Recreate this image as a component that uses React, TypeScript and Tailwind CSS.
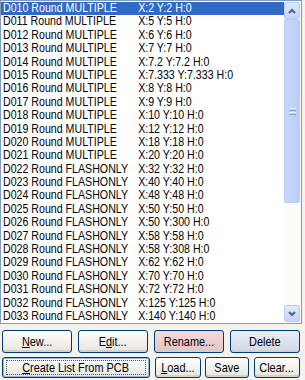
import React from 'react';

type Aperture = { code: string; kind: string; x: string; y: string };

const apertures: Aperture[] = [
  { code: 'D010', kind: 'MULTIPLE', x: '2', y: '2' },
  { code: 'D011', kind: 'MULTIPLE', x: '5', y: '5' },
  { code: 'D012', kind: 'MULTIPLE', x: '6', y: '6' },
  { code: 'D013', kind: 'MULTIPLE', x: '7', y: '7' },
  { code: 'D014', kind: 'MULTIPLE', x: '7.2', y: '7.2' },
  { code: 'D015', kind: 'MULTIPLE', x: '7.333', y: '7.333' },
  { code: 'D016', kind: 'MULTIPLE', x: '8', y: '8' },
  { code: 'D017', kind: 'MULTIPLE', x: '9', y: '9' },
  { code: 'D018', kind: 'MULTIPLE', x: '10', y: '10' },
  { code: 'D019', kind: 'MULTIPLE', x: '12', y: '12' },
  { code: 'D020', kind: 'MULTIPLE', x: '18', y: '18' },
  { code: 'D021', kind: 'MULTIPLE', x: '20', y: '20' },
  { code: 'D022', kind: 'FLASHONLY', x: '32', y: '32' },
  { code: 'D023', kind: 'FLASHONLY', x: '40', y: '40' },
  { code: 'D024', kind: 'FLASHONLY', x: '48', y: '48' },
  { code: 'D025', kind: 'FLASHONLY', x: '50', y: '50' },
  { code: 'D026', kind: 'FLASHONLY', x: '50', y: '300' },
  { code: 'D027', kind: 'FLASHONLY', x: '58', y: '58' },
  { code: 'D028', kind: 'FLASHONLY', x: '58', y: '308' },
  { code: 'D029', kind: 'FLASHONLY', x: '62', y: '62' },
  { code: 'D030', kind: 'FLASHONLY', x: '70', y: '70' },
  { code: 'D031', kind: 'FLASHONLY', x: '72', y: '72' },
  { code: 'D032', kind: 'FLASHONLY', x: '125', y: '125' },
  { code: 'D033', kind: 'FLASHONLY', x: '140', y: '140' },
];

const ScrollButton: React.FC<{ up?: boolean }> = ({ up }) => (
  <div className="h-[17px] w-[16px] shrink-0 rounded-[2px] border border-[#bacbf5] bg-gradient-to-b from-[#e0e9fd] to-[#c3d4fb] flex items-center justify-center">
    <svg width="8" height="6" viewBox="0 0 8 6">
      <path
        d={up ? 'M1 5 L4 2 L7 5' : 'M1 1 L4 4 L7 1'}
        fill="none"
        stroke="#4d6185"
        strokeWidth="2"
      />
    </svg>
  </div>
);

// XP-era Tahoma is narrower than Arial, so squeeze the label horizontally
const Narrow: React.FC<{ children: React.ReactNode }> = ({ children }) => (
  <span className="inline-block scale-x-[0.84] whitespace-pre">{children}</span>
);

const XpButton: React.FC<{
  className?: string;
  children: React.ReactNode;
  tint?: string;
  isDefault?: boolean;
}> = ({ className = '', children, tint = 'from-white to-[#e6e4dc]', isDefault }) => (
  <div
    className={`flex items-center justify-center rounded-[3px] border border-[#003c74] bg-gradient-to-b ${tint} text-[13px] leading-[15px] text-black ${
      isDefault ? 'shadow-[inset_0_0_0_1px_#98b4e4]' : 'shadow-[inset_0_-2px_0_#d6d0c5]'
    } ${className}`}
  >
    {isDefault ? (
      <span className="flex h-[15px] w-[calc(100%-6px)] items-center justify-center border border-dotted border-[#555]">
        <Narrow>{children}</Narrow>
      </span>
    ) : (
      <Narrow>{children}</Narrow>
    )}
  </div>
);

export default function App() {
  return (
    <div
      className="relative h-[380px] w-[305px] overflow-hidden bg-[#f3f2ed]"
      style={{ fontFamily: '"Liberation Sans", Arial, sans-serif' }}
    >
      <div className="flex h-[324px] w-[302px] border border-[#7f9db9] bg-white">
        <div className="flex-1 overflow-hidden pt-[1px] text-[12.5px] leading-[13.4px] text-black">
          {apertures.map((a, i) => (
            <div
              key={a.code}
              className={`h-[13.4px] pl-[2px] ${i === 0 ? 'bg-[#316ac5] text-white' : ''}`}
            >
              <div className="flex w-[320px] origin-left scale-x-[0.85] whitespace-pre">
                <span className="w-[159px] shrink-0">
                  {a.code} Round {a.kind}
                </span>
                <span>
                  X:{a.x} Y:{a.y} H:0
                </span>
              </div>
            </div>
          ))}
        </div>
        <div className="flex w-[17px] flex-col bg-[#fbfbf8] pt-[1px] pb-[1px] pr-[1px]">
          <ScrollButton up />
          <div className="flex flex-1 flex-col">
            <div className="h-[184px] rounded-[2px] border border-[#bacbf5] bg-gradient-to-r from-[#c8d7fb] to-[#bccdf8] flex flex-col items-center justify-center gap-[1px]">
              <div className="h-[1px] w-[7px] bg-[#eef3fe]" />
              <div className="h-[1px] w-[7px] bg-[#8ca4dc]" />
              <div className="h-[1px] w-[7px] bg-[#eef3fe]" />
              <div className="h-[1px] w-[7px] bg-[#8ca4dc]" />
            </div>
          </div>
          <ScrollButton />
        </div>
      </div>

      <div className="mt-[6px] grid w-[302px] grid-cols-4 gap-[6px] px-[2px]">
        <XpButton className="h-[23px]">
          <u>N</u>ew...
        </XpButton>
        <XpButton className="h-[23px]">
          E<u>d</u>it...
        </XpButton>
        <XpButton className="h-[23px]" tint="from-[#f5d9dc] to-[#e3c3c6]">
          Rename...
        </XpButton>
        <XpButton className="h-[23px]" tint="from-[#e8eef6] to-[#cfd9e8]">
          Delete
        </XpButton>
      </div>

      <div className="mt-[4px] flex px-[2px]">
        <XpButton className="h-[21px] w-[148px]" isDefault>
          <u>C</u>reate List From PCB
        </XpButton>
        <XpButton className="ml-[5px] h-[21px] w-[46px]">
          <u>L</u>oad...
        </XpButton>
        <XpButton className="ml-[4px] h-[21px] w-[44px]">
          Save
        </XpButton>
        <XpButton className="ml-[5px] h-[21px] w-[46px]">
          Clear...
        </XpButton>
      </div>
    </div>
  );
}
